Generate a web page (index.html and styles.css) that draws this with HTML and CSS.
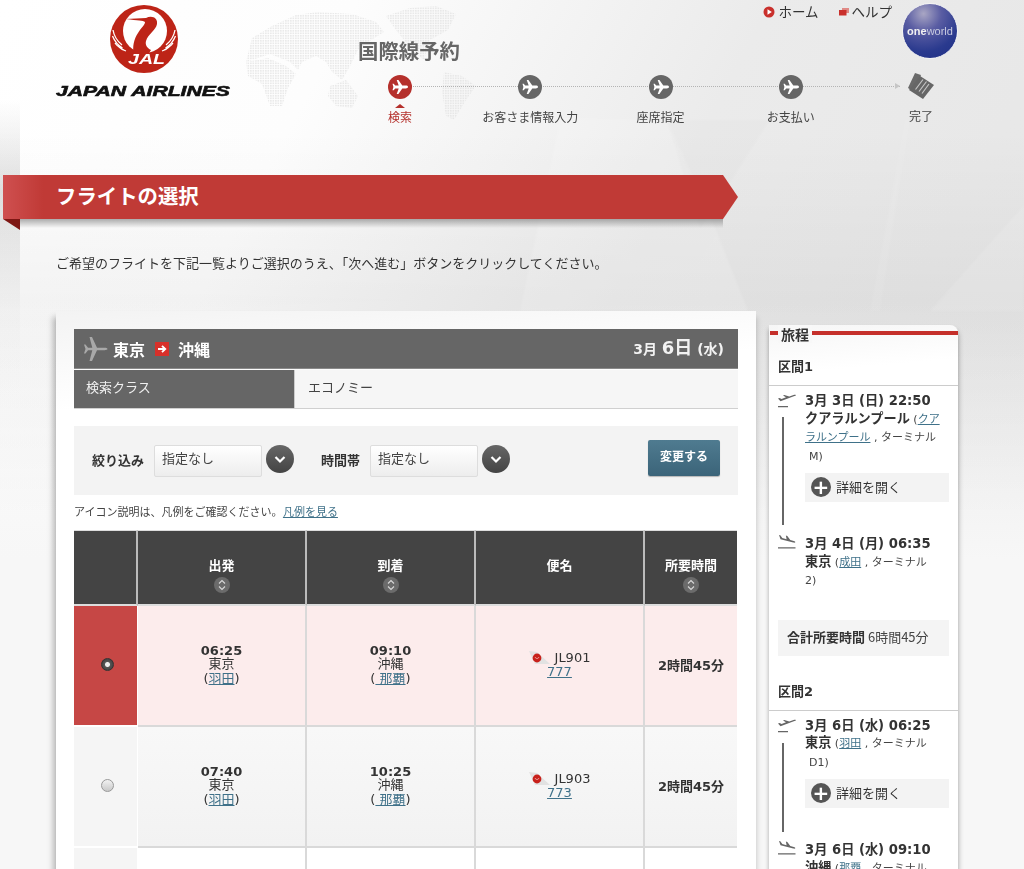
FILE: index.html
```html
<!DOCTYPE html>
<html lang="ja">
<head>
<meta charset="utf-8">
<title>フライトの選択</title>
<link rel="stylesheet" href="styles.css">
</head>
<body>
<svg class="backdrop" width="1024" height="869" viewBox="0 0 1024 869" aria-hidden="true">
  <defs>
    <linearGradient id="fadeL" x1="0" y1="0" x2="0" y2="1"><stop offset="0" stop-color="#aaa" stop-opacity="0"/><stop offset=".3" stop-color="#aaa" stop-opacity=".35"/><stop offset=".7" stop-color="#aaa" stop-opacity=".05"/><stop offset="1" stop-color="#aaa" stop-opacity="0"/></linearGradient>
    <pattern id="dots" width="2.500" height="2.500" patternUnits="userSpaceOnUse"><rect width="1.700" height="1.700" fill="#e2e2e2"/></pattern>
    <filter id="soft"><feGaussianBlur stdDeviation="1"/></filter>
    <filter id="softer"><feGaussianBlur stdDeviation="0.600"/></filter>
  </defs>
  <rect x="0" y="100" width="20" height="300" fill="url(#fadeL)"/>
  <g filter="url(#soft)">
    <polygon points="560,118 666,120 717,232 668,311 520,311" fill="#fff" opacity=".14"/>
    <polygon points="666,120 770,120 700,230" fill="#000" opacity=".012"/>
    <polygon points="717,232 668,311 748,311" fill="#fff" opacity=".15"/>
    <polygon points="1024,205 930,311 1024,311" fill="#fff" opacity=".12"/>
    <polygon points="910,120 880,311 870,311 905,120" fill="#fff" opacity=".08"/>
  </g>
  <g fill="url(#dots)" filter="url(#softer)" opacity=".7">
    <polygon points="246,62 252,38 272,26 296,15 318,12 352,14 376,22 384,32 368,42 358,50 350,66 342,80 332,72 326,62 316,56 302,62 298,70 290,62 270,54"/>
    <polygon points="246,62 268,58 286,66 296,74 288,88 282,106 270,106 262,84 248,76"/>
    <polygon points="330,86 346,80 358,96 352,108 336,106 328,96"/>
    <polygon points="386,16 410,8 436,6 456,14 448,30 430,40 424,60 412,50 396,30"/>
    <polygon points="444,72 462,76 476,86 466,100 454,120 446,116 442,92"/>
  </g>
</svg>

<header class="top">
  <div class="brand">
    <svg class="crane" width="68" height="68" viewBox="0 0 68 68" role="img" aria-label="JAL">
      <circle cx="34" cy="34" r="34" fill="#bd2417"/>
      <circle cx="35" cy="26" r="22" fill="#fff"/>
      <path d="M16 14L36 13C42 10 48 13 47 19C46 25 38 29 36 36C35 40 37 43 41 45L38 50 24 50C22 42 24 34 28 28C31 23 35 20 35 17C33 15.500 28 15.500 16 14z" fill="#bd2417"/>
      <path d="M3 25c1 6 4 11 9 15M2.500 31c2 5 5 9 10 12M5 38c2 3 5 5 9 7M9 42c2 2 4 3 7 4M65 25c-1 6-4 11-9 15M65.500 31c-2 5-5 9-10 12M63 38c-2 3-5 5-9 7M59 42c-2 2-4 3-7 4" stroke="#fff" stroke-width="1.300" fill="none"/>
      <text x="18" y="59" textLength="37" lengthAdjust="spacingAndGlyphs" class="crane-text">JAL</text>
    </svg>
    <svg class="wordmark" width="176" height="16" viewBox="0 0 176 16">
      <text x="1" y="13" textLength="174" lengthAdjust="spacingAndGlyphs" class="wordmark-text">JAPAN AIRLINES</text>
    </svg>
  </div>
  <div class="booking">
    <div class="booking-top">
      <h1 class="booking-title">国際線予約</h1>
      <div class="utility">
        <a class="util-link"><svg width="12" height="12" viewBox="0 0 12 12"><circle cx="6" cy="6" r="5.500" fill="#c9302c"/><polygon points="4.500,3.300 8.800,6 4.500,8.700" fill="#fff"/></svg>ホーム</a>
        <a class="util-link util-help"><svg width="10" height="8" viewBox="0 0 10 8"><rect x="3" width="7" height="5" fill="#e08a86"/><rect y="2" width="7.500" height="5.500" fill="#c9302c"/></svg>ヘルプ</a>
        <div class="globe"><span class="globe-one">one</span><span class="globe-world">world</span></div>
      </div>
    </div>
    <ol class="steps">
      <li class="step step-active"><span class="step-dot"><svg width="24" height="24" viewBox="0 0 24 24"><use href="#plane"/></svg></span><span class="step-caret"></span><span class="step-label">検索</span></li>
      <li class="step"><span class="step-dot"><svg width="24" height="24" viewBox="0 0 24 24"><use href="#plane"/></svg></span><span class="step-label">お客さま情報入力</span></li>
      <li class="step"><span class="step-dot"><svg width="24" height="24" viewBox="0 0 24 24"><use href="#plane"/></svg></span><span class="step-label">座席指定</span></li>
      <li class="step"><span class="step-dot"><svg width="24" height="24" viewBox="0 0 24 24"><use href="#plane"/></svg></span><span class="step-label">お支払い</span></li>
      <li class="step step-last">
        <span class="step-ticket"><svg width="28" height="27" viewBox="0 0 28 27">
          <polygon points="8,0 14,2 7,19 1,15" fill="#6a6a6a"/>
          <polygon points="13,3 27,12 16,26 2,17" fill="#666"/>
          <path d="M8.500 16.500l7.500-10M12 18.500l7.500-10M15 20.500l7-9.500" stroke="#c4c4c4" stroke-width="1.200" fill="none"/>
        </svg></span>
        <span class="step-label">完了</span>
      </li>
    </ol>
    <span class="steps-line"></span>
    <span class="steps-arrow"></span>
  </div>
</header>

<svg width="0" height="0" class="defs" aria-hidden="true">
  <symbol id="plane" viewBox="0 0 24 24"><path fill="#fff" d="M20 12c0-.9-1-1.400-2.200-1.400h-3.500L10.400 5H8.700l2 5.600H7.200L5.700 8.800H4.500l.9 3.200-.9 3.200h1.200l1.500-1.800h3.500l-2 5.600h1.700l3.900-5.600h3.500c1.200 0 2.200-.5 2.200-1.400z"/></symbol>
  <symbol id="takeoff" viewBox="0 0 18 16"><path fill="#666" d="M0 6.500l1.600-.5 2 .9L8 5.300 5 3.500l1.300-.4 5 1.500L15.500 3c1-.4 2-.4 2.300-.1.200.4-.5.9-1.300 1.200L2.500 9.300zM0 14h10v1.200H0z"/></symbol>
  <symbol id="landing" viewBox="0 0 18 16"><path fill="#666" d="M1 0l1.300.2 2 2.800 4.300 1.200L7.900 .6 9.300 1l3 4 3.500 1.100c1 .3 1.700.8 1.500 1.200-.2.400-1 .4-2 .2L2.500 4.300zM0 12.300h17.500v1.200H0z"/></symbol>
  <symbol id="sort" viewBox="0 0 16 16"><circle cx="8" cy="8" r="8" fill="#6b6b6b"/><path d="M5 6.500l3-3 3 3M5 9.500l3 3 3-3" stroke="#d8d8d8" stroke-width="1.100" fill="none"/></symbol>
  <symbol id="chev" viewBox="0 0 28 28"><path d="M9.500 12l4.500 4.500 4.500-4.500" stroke="#fff" stroke-width="2.200" fill="none"/></symbol>
  <symbol id="tail" viewBox="0 0 21 14"><polygon points="0,0 8,1 21,13 6,13" fill="#e2e2e2"/><circle cx="8" cy="7" r="4.400" fill="#c8211b"/><path d="M6 6c1 2 3 2 4 0" stroke="#f5c5c5" stroke-width=".8" fill="none"/></symbol>
</svg>

<div class="banner-wrap">
  <h2 class="banner">フライトの選択</h2>
  <span class="banner-fold"></span>
</div>
<p class="intro">ご希望のフライトを下記一覧よりご選択のうえ、「次へ進む」ボタンをクリックしてください。</p>

<main class="content">
  <section class="panel">
    <div class="route-bar">
      <svg class="route-plane" width="24" height="26" viewBox="0 0 24 26"><path fill="#a9a9a9" d="M23.500 13c0-.7-1.500-1.200-3-1.200H13L8 1H5.500l2.800 10.800H4L1.500 8.500H0l1.500 4.500L0 17.500h1.500L4 14.200h4.300L5.500 25H8l5-10.800h7.500c1.500 0 3-.5 3-1.200z"/></svg>
      <span class="route-city">東京</span>
      <svg class="route-arrow" width="14" height="14" viewBox="0 0 14 14"><rect width="14" height="14" fill="#d8302a"/><path d="M3 7h7M7 3.800L10.300 7 7 10.200" stroke="#fff" stroke-width="1.800" fill="none"/></svg>
      <span class="route-city">沖縄</span>
      <span class="route-date">3月 <b class="route-day">6日</b> (水)</span>
    </div>
    <div class="class-row">
      <div class="class-label">検索クラス</div>
      <div class="class-value">エコノミー</div>
    </div>
    <div class="filter">
      <span class="filter-label filter-label-a">絞り込み</span>
      <span class="select">指定なし</span>
      <svg class="chev" width="28" height="28"><use href="#chev"/></svg>
      <span class="filter-label filter-label-b">時間帯</span>
      <span class="select">指定なし</span>
      <svg class="chev" width="28" height="28"><use href="#chev"/></svg>
      <span class="change-btn">変更する</span>
    </div>
    <p class="legend">アイコン説明は、凡例をご確認ください。 <a class="link legend-link">凡例を見る</a></p>
    <table class="flights">
      <colgroup><col class="c1"><col class="c2"><col class="c3"><col class="c4"><col class="c5"></colgroup>
      <thead>
        <tr>
          <th></th>
          <th>出発<svg class="sort" width="16" height="16"><use href="#sort"/></svg></th>
          <th>到着<svg class="sort" width="16" height="16"><use href="#sort"/></svg></th>
          <th class="th-plain">便名</th>
          <th>所要時間<svg class="sort" width="16" height="16"><use href="#sort"/></svg></th>
        </tr>
      </thead>
      <tbody>
        <tr class="row row-selected">
          <td class="pick"><span class="radio radio-on"></span></td>
          <td><b class="time">06:25</b><span class="city">東京</span><span class="city">(<a class="link">羽田</a>)</span></td>
          <td><b class="time">09:10</b><span class="city">沖縄</span><span class="city">(<a class="link">&nbsp;那覇</a>)</span></td>
          <td><span class="flight"><svg width="21" height="14"><use href="#tail"/></svg><span>JL901</span></span><a class="link plane-type">777</a></td>
          <td class="dur">2時間45分</td>
        </tr>
        <tr class="row row-alt">
          <td class="pick"><span class="radio"></span></td>
          <td><b class="time">07:40</b><span class="city">東京</span><span class="city">(<a class="link">羽田</a>)</span></td>
          <td><b class="time">10:25</b><span class="city">沖縄</span><span class="city">(<a class="link">&nbsp;那覇</a>)</span></td>
          <td><span class="flight"><svg width="21" height="14"><use href="#tail"/></svg><span>JL903</span></span><a class="link plane-type">773</a></td>
          <td class="dur">2時間45分</td>
        </tr>
        <tr class="row row-plain">
          <td class="pick"></td><td></td><td></td><td></td><td></td>
        </tr>
      </tbody>
    </table>
  </section>

  <aside class="itinerary">
    <h3 class="it-title"><span>旅程</span></h3>
    <h4 class="leg-title">区間1</h4>
    <div class="leg">
      <svg class="leg-icon" width="18" height="16"><use href="#takeoff"/></svg>
      <div class="seg-text">
        <b class="seg-date">3月 3日 (日) 22:50</b>
        <b class="seg-city">クアラルンプール</b> (<a class="link">クアラルンプール</a> , ターミナル<br><span class="seg-indent">M)</span>
      </div>
      <span class="leg-line leg-line-a"></span>
      <div class="detail"><span class="plus">+</span>詳細を開く</div>
      <svg class="leg-icon leg-icon-land" width="18" height="16"><use href="#landing"/></svg>
      <div class="seg-text seg-arrive">
        <b class="seg-date">3月 4日 (月) 06:35</b>
        <b class="seg-city">東京</b> (<a class="link">成田</a> , ターミナル<br>2)
      </div>
    </div>
    <div class="total"><b>合計所要時間</b> 6時間45分</div>
    <h4 class="leg-title leg-title-2">区間2</h4>
    <div class="leg">
      <svg class="leg-icon" width="18" height="16"><use href="#takeoff"/></svg>
      <div class="seg-text">
        <b class="seg-date">3月 6日 (水) 06:25</b>
        <b class="seg-city">東京</b> (<a class="link">羽田</a> , ターミナル<br><span class="seg-indent">D1)</span>
      </div>
      <span class="leg-line leg-line-b"></span>
      <div class="detail"><span class="plus">+</span>詳細を開く</div>
      <svg class="leg-icon leg-icon-land" width="18" height="16"><use href="#landing"/></svg>
      <div class="seg-text seg-arrive">
        <b class="seg-date">3月 6日 (水) 09:10</b>
        <b class="seg-city">沖縄</b> (<a class="link">那覇</a> , ターミナル
      </div>
    </div>
  </aside>
</main>
</body>
</html>
```

FILE: styles.css
```css
* { box-sizing: border-box; }
html, body { margin: 0; padding: 0; }
body {
  position: relative;
  width: 1024px;
  height: 869px;
  overflow: hidden;
  font-family: "DejaVu Sans", "Noto Sans CJK JP", sans-serif;
  color: #333;
  font-size: 13px;
  background:
    linear-gradient(rgba(0,0,0,0) 130px, rgba(0,0,0,.045) 300px, rgba(0,0,0,0) 520px),
    linear-gradient(rgba(247,247,247,0) 300px, #f7f7f7 560px),
    linear-gradient(118deg, #fff 0%, #fdfdfd 24%, #ebebeb 52%, #e8e8e8 72%, #e6e6e6 100%);
}
.backdrop { position: absolute; left: 0; top: 0; }
.defs { position: absolute; }

.top { position: relative; display: flex; height: 175px; }
.brand { margin-left: 56px; padding-top: 5px; width: 174px; flex: none; display: flex; flex-direction: column; align-items: center; }
.crane { display: block; margin-left: 2px; }
.crane-text { font: italic 700 14px "Liberation Sans", sans-serif; fill: #fff; }
.wordmark { display: block; margin-top: 10px; }
.wordmark-text { font: italic 700 15px "Liberation Sans", sans-serif; fill: #111; stroke: #111; stroke-width: .6px; }

.booking { position: relative; margin-left: 105px; width: 651px; }
.booking-top { display: flex; justify-content: space-between; height: 75px; }
.booking-title { margin: 37px 0 0 23px; font: 700 20.400px/26px "Noto Sans CJK JP", sans-serif; color: #666; }
.utility { display: flex; align-items: flex-start; padding-top: 4px; margin-right: 28px; }
.util-link { display: flex; align-items: center; gap: 3px; font: 400 13.500px/15px "Noto Sans CJK JP", sans-serif; color: #333; }
.util-help { margin-left: 20px; }
.util-link svg { flex: none; }
.globe {
  width: 56px; height: 56px; margin-left: 10px; margin-top: -1px; border-radius: 50%;
  border: 1px solid #f4f4f4;
  background: radial-gradient(circle at 38% 18%, #a9a6c4 0%, #5a5da3 32%, #2a3a8e 68%, #1f2f86 100%);
  display: flex; align-items: center; justify-content: center;
  font: 700 11px "Liberation Sans", sans-serif; color: #f1f1f1;
}
.globe-world { font-weight: 400; color: #c8cbe0; }

.steps { position: relative; list-style: none; margin: 0; padding: 0; display: flex; z-index: 1; }
.step { width: 130.500px; display: flex; flex-direction: column; align-items: center; position: relative; }
.step-dot { width: 24px; height: 24px; border-radius: 50%; background: #666; display: block; }
.step-dot svg { display: block; }
.step-active .step-dot { background: #b5302c; }
.step-caret { position: absolute; top: 29px; width: 0; height: 0; border-left: 5px solid transparent; border-right: 5px solid transparent; border-bottom: 4px solid #b5302c; }
.step-label { margin-top: 9px; font: 400 12px/17px "Noto Sans CJK JP", sans-serif; color: #444; white-space: nowrap; }
.step-active .step-label { color: #b5302c; }
.step-ticket { display: block; height: 27px; margin-top: -2px; }
.step-last .step-label { margin-top: 7px; }
.steps-line { position: absolute; left: 65px; top: 86px; width: 500px; border-top: 1px dotted #b4b4b4; }
.steps-arrow { position: absolute; left: 560px; top: 83px; width: 0; height: 0; border-top: 3.500px solid transparent; border-bottom: 3.500px solid transparent; border-left: 5px solid #c6c6c6; }

.banner-wrap { position: relative; margin-left: 3px; width: 736px; height: 44px; }
.banner {
  position: relative; z-index: 1;
  margin: 0; height: 44px; padding-left: 53px;
  font: 700 20.400px/40px "Noto Sans CJK JP", sans-serif; color: #fff;
  background: linear-gradient(90deg, #cf5050 0, #c03a36 40px, #c03a36 100%);
  clip-path: polygon(0 0, 720px 0, 735px 22px, 720px 44px, 0 44px);
}
.banner-wrap::after { content: ""; position: absolute; left: 17px; width: 703px; top: 44px; height: 9px; background: linear-gradient(rgba(120,120,120,.6), rgba(200,200,200,0)); }
.banner-fold { position: absolute; left: 0; top: 44px; width: 0; height: 0; border-top: 11px solid #7e1714; border-left: 17px solid transparent; z-index: 1; }
.intro { position: relative; margin: 34px 0 0 56px; font: 400 13px/19px "Noto Sans CJK JP", sans-serif; color: #333; }

.content { position: relative; display: flex; align-items: flex-start; margin: 39px 0 0 56px; }
.panel { width: 700px; height: 600px; padding: 18px 18px 0; background: linear-gradient(175deg, #f3f3f3 0, #fff 100px); box-shadow: -3px 6px 6px rgba(0,0,0,.25), 2px 6px 5px rgba(0,0,0,.1); }
.route-bar { display: flex; align-items: center; height: 40px; background: #666; border-bottom: 1px solid #8a8a8a; padding: 0 14px 0 10px; color: #fff; font-family: "Noto Sans CJK JP", sans-serif; font-weight: 700; }
.route-plane { flex: none; margin-right: 5px; }
.route-city { font-size: 16px; }
.route-arrow { flex: none; margin: 0 9px 0 10px; }
.route-date { margin-left: auto; font: 700 14px/20px "DejaVu Sans", "Noto Sans CJK JP", sans-serif; color: #f2f2f2; }
.route-day { font-size: 18px; font-weight: 700; }
.class-row { display: flex; margin-top: 1px; height: 39px; background: #f6f6f6; border-bottom: 1px solid #d0d0d0; font: 400 13px/33px "Noto Sans CJK JP", sans-serif; }
.class-label { width: 221px; background: #666; color: #f0f0f0; padding-left: 12px; border-right: 1px solid #ccc; }
.class-value { padding-left: 13px; color: #444; }

.filter { display: flex; align-items: center; margin-top: 17px; height: 69px; padding: 0 18px; background: #f3f3f3; font-family: "Noto Sans CJK JP", sans-serif; }
.filter-label { margin-top: -2px; font-size: 13px; font-weight: 700; color: #333; white-space: nowrap; }
.filter-label-a { width: 62px; }
.filter-label-b { width: 49px; margin-left: 27px; }
.select { width: 108px; height: 32px; margin-right: 4px; padding-left: 7px; border: 1px solid #ddd; background: linear-gradient(#fff, #ededed); font-size: 13px; line-height: 24px; color: #444; border-radius: 2px; }
.chev { flex: none; margin-top: -3px; border-radius: 50%; background: linear-gradient(#666, #444); }
.change-btn { margin: -5px 0 0 auto; width: 72px; height: 36px; border-radius: 2px; background: linear-gradient(#4f7b90, #3b6479); box-shadow: 0 1px 1px rgba(0,0,0,.25); color: #fff; font-size: 12px; font-weight: 700; line-height: 32px; text-align: center; }
.legend { margin: 8px 0 0; font: 400 11px/17px "Noto Sans CJK JP", sans-serif; color: #444; }
.link { color: #3f7189; text-decoration: underline; }
.legend-link { margin-left: -2px; }

.flights { width: 663px; margin-top: 10px; border-collapse: separate; border-spacing: 0; table-layout: fixed; font-family: "DejaVu Sans", "Noto Sans CJK JP", sans-serif; }
.c1 { width: 64px; } .c2 { width: 169px; } .c3 { width: 169px; } .c4 { width: 169px; } .c5 { width: 92px; }
.flights th { height: 76px; padding: 13px 0 0; background: #444; color: #fff; font: 700 13px/18px "Noto Sans CJK JP", sans-serif; border-right: 2px solid #bbb; border-bottom: 2px solid #ddd; border-top: 1px solid #ddd; vertical-align: middle; }
.flights th:last-child { border-right: 0; }
.flights th.th-plain { padding: 0 0 5px; }
.sort { display: block; margin: 3px auto 0; }
.flights td { height: 121px; padding: 0 0 2px; text-align: center; vertical-align: middle; border-right: 2px solid #d9d9d9; border-bottom: 2px solid #d9d9d9; font-size: 13px; }
.flights td:last-child { border-right: 0; }
.row-selected td { background: #fcecec; }
.row-alt td { background: linear-gradient(#f8f8f8, #f2f2f2); }
.row-plain td { background: #fff; }
.row td.pick { padding-left: 3px; background: #f5f5f5; border-right: 1px solid #fff; border-bottom: 2px solid #fff; }
.row-selected td.pick { background: #c64745; }
.radio { display: block; margin: 0 auto; width: 13px; height: 13px; border-radius: 50%; background: linear-gradient(#f2f2f2, #c8c8c8); border: 1px solid #999; }
.radio-on { background: radial-gradient(circle, #eee 0 2px, #555 3px, #333 100%); border-color: #333; }
.time { display: block; margin-bottom: -2px; font-size: 13px; line-height: 14px; }
.city { display: block; font: 400 13px/15px "DejaVu Sans", "Noto Sans CJK JP", sans-serif; }
.flight { display: flex; align-items: center; justify-content: center; gap: 5px; line-height: 14px; font-size: 13px; }
.plane-type { display: block; line-height: 14px; }
.row td.dur { font-size: 13px; font-weight: 700; color: #333; }

.itinerary { position: relative; width: 189px; height: 560px; margin: 14px 0 0 13px; background: linear-gradient(175deg, #f6f6f6 0, #fff 50px); box-shadow: 1px 4px 5px rgba(0,0,0,.25), -1px 4px 4px rgba(0,0,0,.12); border-radius: 0 8px 0 0; }
.it-title { margin: 0; height: 18px; display: flex; align-items: center; font: 700 14px/18px "Noto Sans CJK JP", sans-serif; color: #333; background: linear-gradient(#c5302b, #c5302b) 1px 6px / 188px 4px no-repeat; }
.it-title span { margin-left: 9px; padding: 0 3px; background: #f8f8f8; }
.leg-title { margin: 14px 0 0; height: 29px; padding: 0 0 0 9px; font: 700 13px/19px "DejaVu Sans", "Noto Sans CJK JP", sans-serif; color: #333; border-bottom: 1px solid #ccc; }
.leg-title-2 { margin-top: 26px; height: 29px; }
.leg { position: relative; display: grid; grid-template-columns: 27px 1fr; padding: 6px 9px 0; }
.leg-icon { display: block; }
.leg-icon-land { margin-top: 33px; }
.seg-text { font: 400 11px/18.500px "DejaVu Sans", "Noto Sans CJK JP", sans-serif; color: #444; }
.seg-arrive { margin-top: 33px; }
.seg-date { display: block; font-size: 13.200px; color: #333; white-space: nowrap; }
.seg-city { font: 700 13.200px/14px "Noto Sans CJK JP", sans-serif; color: #333; }
.seg-text .link { font-family: "Noto Sans CJK JP", sans-serif; line-height: 14px; }
.seg-indent { margin-left: 4px; }
.detail { grid-column: 2; margin-top: 7px; width: 144px; height: 29px; padding-bottom: 2px; display: flex; align-items: center; background: #f3f3f3; font: 400 13px/19px "Noto Sans CJK JP", sans-serif; color: #333; }
.plus { flex: none; width: 20px; height: 20px; margin: 0 5px 0 6px; border-radius: 50%; background: #555; color: #fff; font: 700 20px/20px "DejaVu Sans", sans-serif; text-align: center; }
.leg-line { position: absolute; left: 13px; width: 2px; background: #666; }
.leg-line-a { top: 31px; height: 108px; }
.leg-line-b { top: 32px; height: 89px; }
.total { margin: 29px 9px 0; height: 36px; background: #f4f4f4; padding-left: 9px; font: 400 13px/34px "Noto Sans CJK JP", sans-serif; color: #444; white-space: nowrap; }
.total b { color: #333; }
```
